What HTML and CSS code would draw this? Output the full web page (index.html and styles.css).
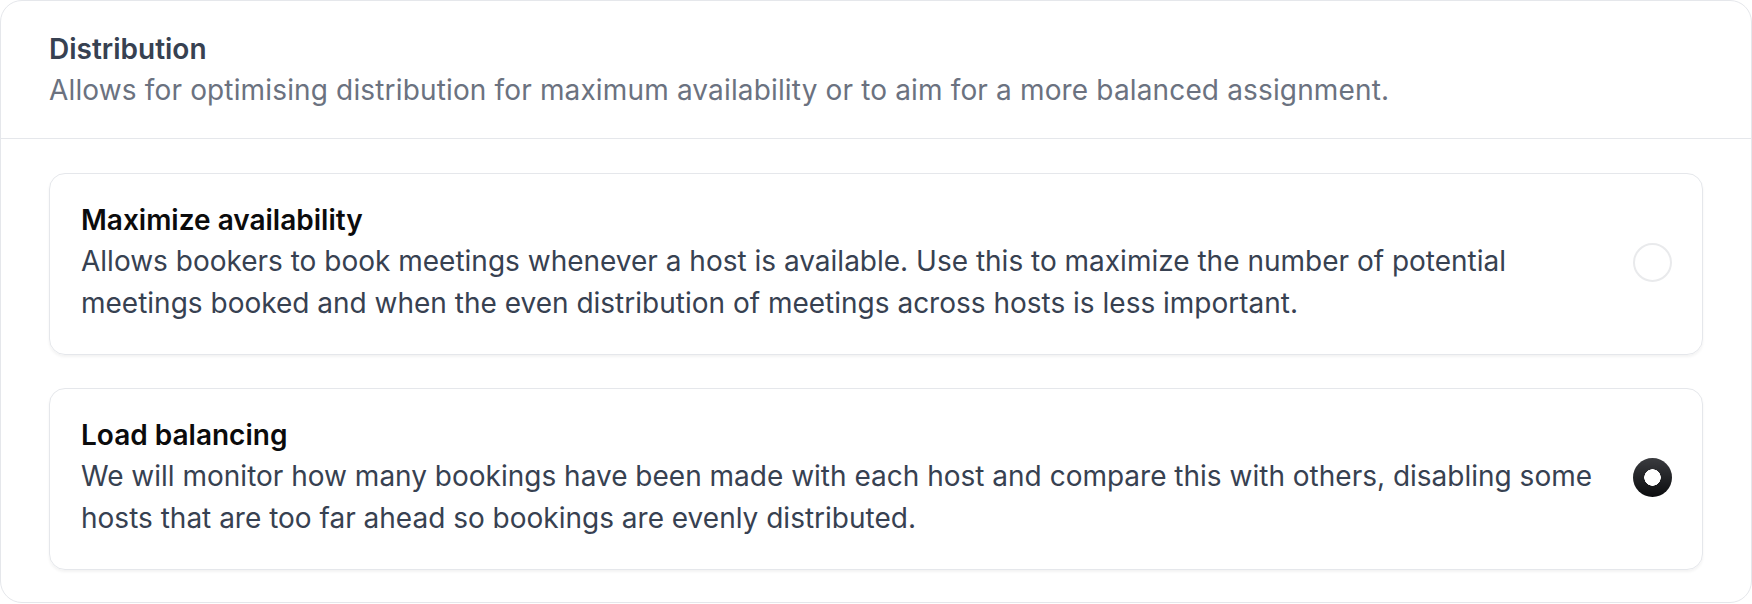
FILE: index.html
```html
<!DOCTYPE html>
<html lang="en">
<head>
    <meta charset="UTF-8">
    <meta name="viewport" content="width=device-width, initial-scale=1.0">
    <title>Distribution</title>
    <link rel="stylesheet" href="styles.css">
</head>
<body>
    <section class="panel">
        <div class="panel-head">
            <h2 class="panel-title">Distribution</h2>
            <p class="panel-desc">Allows for optimising distribution for maximum availability or to aim for a more balanced assignment.</p>
        </div>

        <div class="options">
            <label class="option">
                <div class="option-text">
                    <span class="option-title">Maximize availability</span>
                    <span class="option-desc">Allows bookers to book meetings whenever a host is available. Use this to maximize the number of potential meetings booked and when the even distribution of meetings across hosts is less important.</span>
                </div>
                <span class="radio"></span>
            </label>

            <label class="option">
                <div class="option-text">
                    <span class="option-title">Load balancing</span>
                    <span class="option-desc">We will monitor how many bookings have been made with each host and compare this with others, disabling some hosts that are too far ahead so bookings are evenly distributed.</span>
                </div>
                <span class="radio checked"></span>
            </label>
        </div>
    </section>
</body>
</html>
```

FILE: styles.css
```css
body {
    margin: 0;
    font-family: Inter, "Noto Sans", sans-serif;
    background: #fff;
}

.panel {
    box-sizing: border-box;
    width: 1752px;
    height: 603px;
    border: 1px solid #e5e7eb;
    border-radius: 22px;
}

.panel-head {
    padding: 28px 48px 27px;
    border-bottom: 1px solid #e5e7eb;
}

.panel-title {
    margin: 0;
    font-size: 28px;
    line-height: 40px;
    font-weight: 600;
    color: #374151;
}

.panel-desc {
    margin: 0;
    font-size: 28px;
    line-height: 42px;
    letter-spacing: 0.15px;
    color: #6b7280;
}

.options {
    display: flex;
    flex-direction: column;
    gap: 33px;
    padding: 34px 48px 30px;
}

.option {
    display: flex;
    align-items: center;
    gap: 40px;
    padding: 26px 30px 30px 31px;
    border: 1px solid #e5e7eb;
    border-radius: 16px;
    box-shadow: 0 2px 3px rgba(0, 0, 0, 0.05);
    cursor: pointer;
}

.option-text {
    flex: 1;
    display: flex;
    flex-direction: column;
}

.option-title {
    font-size: 28px;
    line-height: 40px;
    font-weight: 600;
    color: #0b0b0c;
}

.option-desc {
    font-size: 28px;
    line-height: 42px;
    color: #374151;
}

.radio {
    flex: none;
    box-sizing: border-box;
    width: 39px;
    height: 39px;
    border: 2px solid #e9eaec;
    border-radius: 50%;
    background: #fff;
}

.radio.checked {
    border: none;
    background: radial-gradient(circle, #fff 0 8px, transparent 8.5px),
                linear-gradient(#3a3b3f, #0b0c0e);
}
```
